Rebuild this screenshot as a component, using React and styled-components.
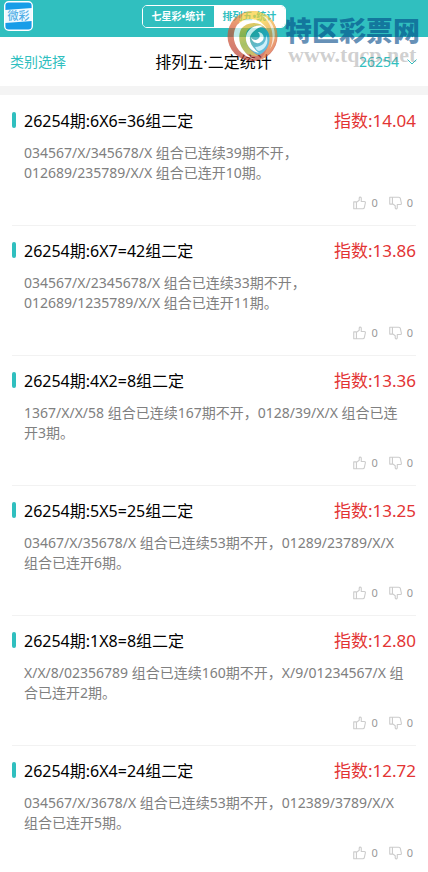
import React from "react";
import styled, { createGlobalStyle } from "styled-components";

const teal = "#30bfbf";

const GlobalStyle = createGlobalStyle`
  * { box-sizing: border-box; }
  body {
    margin: 0;
    background: #fff;
    color: #000;
    font-family: "Noto Sans", "Noto Sans CJK SC", sans-serif;
  }
  button { font: inherit; border: 0; margin: 0; padding: 0; background: none; cursor: pointer; }
  h1, h2, p { margin: 0; font-weight: 400; }
`;

const Page = styled.div`
  position: relative;
`;

const TopBar = styled.header`
  display: grid;
  grid-template-columns: 1fr auto 1fr;
  align-items: center;
  height: 37px;
  padding: 0 4px;
  background: ${teal};
`;

const HomeLink = styled.a`
  display: flex;
  width: 29px;
  height: 31px;
  align-self: start;
  padding-top: 1px;
`;

const Tabs = styled.nav`
  display: flex;
  height: 23px;
  margin-bottom: 4px;
  border: 1px solid #fff;
  border-radius: 5px;
  overflow: hidden;
`;

const Tab = styled.button`
  && {
    width: 71px;
    font-size: 10px;
    font-weight: 700;
    line-height: 21px;
    white-space: nowrap;
    color: ${(p) => (p.$active ? teal : "#fff")};
    background: ${(p) => (p.$active ? "#fff" : teal)};
  }
`;

const FilterBar = styled.div`
  display: grid;
  grid-template-columns: 1fr auto 1fr;
  align-items: center;
  height: 49px;
  padding: 0 11px 0 10px;
`;

const FilterButton = styled.button`
  && {
    display: flex;
    align-items: center;
    gap: 8px;
    justify-self: ${(p) => p.$side};
    color: ${teal};
    font-size: 14px;
    line-height: 20px;
  }
`;

const PageTitle = styled.h1`
  font-size: 16px;
  line-height: 24px;
`;

const List = styled.main`
  padding: 1px 12px 0;
  border-top: 9px solid #f4f4f4;
`;

const Item = styled.article`
  padding: 12px 0 13px;
  border-bottom: 1px solid #f2f2f2;
`;

const ItemHead = styled.div`
  display: flex;
  align-items: flex-start;
`;

const Marker = styled.span`
  width: 4px;
  height: 16px;
  margin: 4px 8px 0 0;
  border-radius: 2px;
  background: ${teal};
`;

const ItemTitle = styled.h2`
  flex: 1;
  font-size: 16px;
  line-height: 26px;
`;

const Score = styled.span`
  font-size: 17px;
  line-height: 26px;
  color: #e33434;
`;

const Description = styled.p`
  margin: 9px 8px 0 12px;
  font-size: 14px;
  line-height: 20px;
  color: #808080;
`;

const Combo = styled.span`
  white-space: nowrap;
`;

const Votes = styled.div`
  display: flex;
  justify-content: flex-end;
  gap: 11px;
  margin-top: 11px;
  padding-right: 3px;
`;

const Vote = styled.button`
  && {
    display: flex;
    align-items: center;
    gap: 5px;
    font-size: 11px;
    line-height: 18px;
    color: #999;
  }
`;

const Watermark = styled.div`
  position: absolute;
  top: 10px;
  right: 8px;
  display: flex;
  gap: 7px;
  pointer-events: none;
`;

const WatermarkText = styled.div`
  display: flex;
  flex-direction: column;
  padding-top: 5px;
`;

const WatermarkName = styled.span`
  font-family: "Noto Sans CJK SC", sans-serif;
  font-size: 27px;
  font-weight: 900;
  line-height: 30px;
  color: rgba(0, 70, 135, 0.6);
`;

const WatermarkUrl = styled.span`
  padding-left: 3px;
  font-family: "Liberation Serif", serif;
  font-size: 22px;
  font-weight: 700;
  line-height: 20px;
  color: rgba(120, 120, 120, 0.35);
`;

function AppLogo() {
  return (
    <svg width="29" height="31" viewBox="0 0 29 31" role="img" aria-label="微彩">
      <rect x="0.7" y="0.7" width="27.6" height="28.6" rx="4" fill="#179de8" stroke="#fff" strokeWidth="1.4" />
      <path d="M1 9L28 7V20L1 22Z" fill="#f0f9ff" />
      <text x="14.5" y="18.5" textAnchor="middle" fontSize="11" fontWeight="500" fontFamily="Noto Sans CJK SC, sans-serif" fill="#4eaee6">微彩</text>
    </svg>
  );
}

function Thumb({ down }) {
  return (
    <svg width="13" height="14" viewBox="0 0 14 14" fill="none" stroke="#ccc" strokeWidth="1.2" strokeLinejoin="round" aria-hidden="true">
      <g transform={down ? "matrix(1 0 0 -1 0 14)" : undefined}>
        <path d="M.8 5.8H3.7V13.2H.8ZM3.7 6.3L6.7 4V1.6Q6.8.6 7.9.7Q8.9.8 8.9 2V5.4H12.1Q13.6 5.5 13.3 7L12.2 11.9Q11.9 13.2 10.6 13.2H3.7" />
      </g>
    </svg>
  );
}

function SwirlLogo() {
  return (
    <svg width="51" height="52" viewBox="0 0 51 52" opacity="0.68" aria-hidden="true">
      <defs>
        <linearGradient id="rim" x1="0.6" y1="0" x2="0.4" y2="1">
          <stop offset="0" stopColor="#f3a02c" />
          <stop offset="0.4" stopColor="#d95a30" />
          <stop offset="1" stopColor="#b5352c" />
        </linearGradient>
        <linearGradient id="leaf" x1="0.3" y1="0" x2="0.6" y2="1">
          <stop offset="0" stopColor="#e9b51e" />
          <stop offset="0.6" stopColor="#7da51f" />
          <stop offset="1" stopColor="#c0a020" />
        </linearGradient>
        <linearGradient id="sun" x1="0" y1="0" x2="0.8" y2="1">
          <stop offset="0" stopColor="#fbc72c" />
          <stop offset="0.4" stopColor="#f8d334" />
          <stop offset="1" stopColor="#d94e30" />
        </linearGradient>
        <linearGradient id="sea" x1="0" y1="0" x2="1" y2="1">
          <stop offset="0" stopColor="#158f74" />
          <stop offset="1" stopColor="#1aa2e4" />
        </linearGradient>
      </defs>
      <circle cx="25.500" cy="26" r="25" fill="url(#rim)" />
      <path d="M20 2C35 -2 49 9 50 24C50 36 43 46 33 50C42 40 45 27 38 18C31 10 20 10 12 16C12 9 15 4 20 2Z" fill="url(#sun)" />
      <path d="M13 16C5 30 12 46 31 46C22 40 17 32 20 24C23 16 31 14 38 18C31 9 19 9 13 16Z" fill="url(#leaf)" />
      <path d="M20 21C25 14 36 14 41 22C45 30 41 41 32 45C23 43 16 31 20 21Z" fill="url(#sea)" />
      <path d="M10 15C2 28 9 45 27 49C15 43 9 31 14 19C20 11 33 11 40 19C33 8 19 5 10 15Z" fill="#fff" />
      <path d="M33 4C44 11 49 25 43 39C52 26 48 10 33 4Z" fill="#fff" opacity="0.7" />
      <path d="M36 16C28 14 20 19 19 27C18 34 24 42 32 43C26 38 22 33 23 27C24 22 30 18 36 16Z" fill="#fff" />
      <path d="M24 27C25 34 33 35 36 30C38 26 35 22 31 22C34 25 33 29 29 30C26 30 25 29 24 27Z" fill="#fff" />
      <path d="M28 37C35 37 40 32 39 25C43 32 38 40 32 41Q29 40 28 37Z" fill="#b6e8f6" />
    </svg>
  );
}

const items = [
  { set: "6X6=36", score: "14.04", parts: [["034567/X/345678/X", "组合已连续39期不开，"], ["012689/235789/X/X", "组合已连开10期。"]] },
  { set: "6X7=42", score: "13.86", parts: [["034567/X/2345678/X", "组合已连续33期不开，"], ["012689/1235789/X/X", "组合已连开11期。"]] },
  { set: "4X2=8", score: "13.36", parts: [["1367/X/X/58", "组合已连续167期不开，"], ["0128/39/X/X", "组合已连开3期。"]] },
  { set: "5X5=25", score: "13.25", parts: [["03467/X/35678/X", "组合已连续53期不开，"], ["01289/23789/X/X", "组合已连开6期。"]] },
  { set: "1X8=8", score: "12.80", parts: [["X/X/8/02356789", "组合已连续160期不开，"], ["X/9/01234567/X", "组合已连开2期。"]] },
  { set: "6X4=24", score: "12.72", parts: [["034567/X/3678/X", "组合已连续53期不开，"], ["012389/3789/X/X", "组合已连开5期。"]] },
];

export default function App() {
  return (
    <Page>
      <GlobalStyle />
      <TopBar>
        <HomeLink href="#"><AppLogo /></HomeLink>
        <Tabs>
          <Tab>七星彩•统计</Tab>
          <Tab $active>排列五•统计</Tab>
        </Tabs>
      </TopBar>
      <FilterBar>
        <FilterButton $side="start">类别选择</FilterButton>
        <PageTitle>排列五·二定统计</PageTitle>
        <FilterButton $side="end">
          26254
          <svg width="10" height="6" viewBox="0 0 10 6" fill="none" stroke={teal} aria-hidden="true"><path d="M.5 .5L5 5L9.500 .5" /></svg>
        </FilterButton>
      </FilterBar>
      <List>
        {items.map((item) => (
          <Item key={item.set}>
            <ItemHead>
              <Marker />
              <ItemTitle>26254期:{item.set}组二定</ItemTitle>
              <Score>指数:{item.score}</Score>
            </ItemHead>
            <Description>
              {item.parts.map(([combo, text]) => (
                <React.Fragment key={combo}><Combo>{combo}</Combo> {text}</React.Fragment>
              ))}
            </Description>
            <Votes>
              <Vote aria-label="赞 0"><Thumb />0</Vote>
              <Vote aria-label="踩 0"><Thumb down />0</Vote>
            </Votes>
          </Item>
        ))}
      </List>
      <Watermark>
        <SwirlLogo />
        <WatermarkText>
          <WatermarkName>特区彩票网</WatermarkName>
          <WatermarkUrl>www.tqcp.net</WatermarkUrl>
        </WatermarkText>
      </Watermark>
    </Page>
  );
}
